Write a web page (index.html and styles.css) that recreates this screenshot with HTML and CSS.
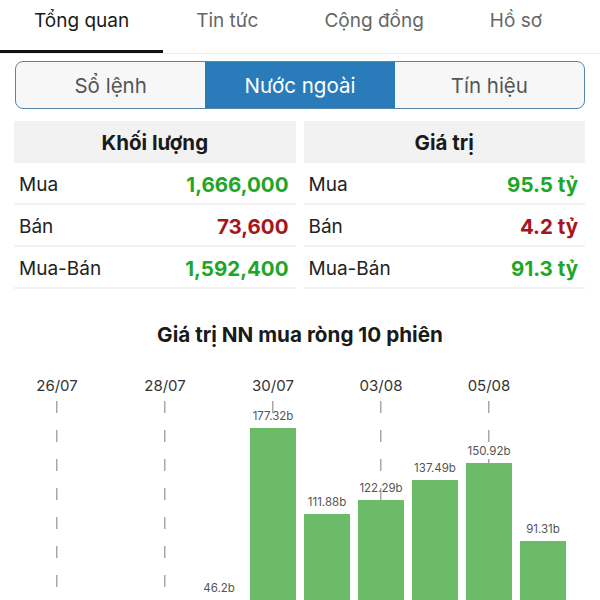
FILE: index.html
```html
<!DOCTYPE html>
<html lang="vi">
<head>
<meta charset="utf-8">
<title>Nước ngoài</title>
<link rel="stylesheet" href="styles.css">
</head>
<body>
<nav class="tabs">
  <div class="tab active">Tổng quan</div>
  <div class="tab">Tin tức</div>
  <div class="tab">Cộng đồng</div>
  <div class="tab">Hồ sơ</div>
</nav>

<div class="segment">
  <div class="seg">Sổ lệnh</div>
  <div class="seg on">Nước ngoài</div>
  <div class="seg">Tín hiệu</div>
</div>

<div class="tables">
  <div class="table">
    <div class="thead">Khối lượng</div>
    <div class="row"><span class="lbl">Mua</span><span class="val up">1,666,000</span></div>
    <div class="row"><span class="lbl">Bán</span><span class="val down">73,600</span></div>
    <div class="row"><span class="lbl">Mua-Bán</span><span class="val up">1,592,400</span></div>
  </div>
  <div class="table">
    <div class="thead">Giá trị</div>
    <div class="row"><span class="lbl">Mua</span><span class="val up">95.5 tỷ</span></div>
    <div class="row"><span class="lbl">Bán</span><span class="val down">4.2 tỷ</span></div>
    <div class="row"><span class="lbl">Mua-Bán</span><span class="val up">91.3 tỷ</span></div>
  </div>
</div>

<h2 class="chart-title">Giá trị NN mua ròng 10 phiên</h2>

<div class="chart">
  <div class="col"><div class="date">26/07</div><div class="plot dashed"></div></div>
  <div class="col"><div class="date"></div><div class="plot"></div></div>
  <div class="col"><div class="date">28/07</div><div class="plot dashed"></div></div>
  <div class="col"><div class="date"></div><div class="plot"><span class="vl">46.2b</span><div class="bar" style="height:61px"></div></div></div>
  <div class="col"><div class="date">30/07</div><div class="plot dashed"><span class="vl">177.32b</span><div class="bar" style="height:233px"></div></div></div>
  <div class="col"><div class="date"></div><div class="plot"><span class="vl">111.88b</span><div class="bar" style="height:147px"></div></div></div>
  <div class="col"><div class="date">03/08</div><div class="plot dashed"><span class="vl">122.29b</span><div class="bar" style="height:161px"></div></div></div>
  <div class="col"><div class="date"></div><div class="plot"><span class="vl">137.49b</span><div class="bar" style="height:181px"></div></div></div>
  <div class="col"><div class="date">05/08</div><div class="plot dashed"><span class="vl">150.92b</span><div class="bar" style="height:198px"></div></div></div>
  <div class="col"><div class="date"></div><div class="plot"><span class="vl">91.31b</span><div class="bar" style="height:120px"></div></div></div>
</div>
</body>
</html>
```

FILE: styles.css
```css
* { box-sizing: border-box; }
html, body { margin: 0; padding: 0; background: #fff; }
body {
  font-family: Inter, "Noto Sans", "DejaVu Sans", sans-serif;
  color: #222;
  overflow: hidden;
}

.tabs {
  display: flex;
  height: 54px;
  border-bottom: 1px solid #ededed;
}
.tab {
  padding: 9px 33px 0;
  font-size: 19px;
  line-height: 24px;
  color: #666;
  height: 53px;
}
.tab.active {
  color: #1a1a1a;
  border-bottom: 3px solid #111;
  padding-left: 34px;
  padding-right: 34px;
}

.segment {
  display: flex;
  margin: 7px 15px 0;
  height: 48px;
  border: 1.5px solid #5585ab;
  border-radius: 8px;
  overflow: hidden;
  background: #f7f7f8;
}
.seg {
  flex: 1;
  display: flex;
  align-items: center;
  justify-content: center;
  font-size: 20.5px;
  color: #555;
}
.seg.on {
  background: #2a7bb9;
  color: #fff;
}

.tables {
  display: grid;
  grid-template-columns: 1fr 1fr;
  column-gap: 8px;
  margin: 12px 15px 0 14px;
}
.thead {
  height: 42px;
  background: #f2f2f2;
  display: flex;
  align-items: center;
  justify-content: center;
  font-size: 20.5px;
  font-weight: 700;
  color: #1a1a1a;
}
.row {
  display: flex;
  justify-content: space-between;
  align-items: center;
  height: 42px;
  padding: 2px 7px 0 5px;
  border-bottom: 2px solid #f2f2f2;
  font-size: 19px;
}
.lbl { color: #222; }
.val { font-weight: 700; font-size: 20.5px; }
.up { color: #1ea629; }
.down { color: #a6141c; }

.chart-title {
  margin: 34px 0 0;
  text-align: center;
  font-size: 20.7px;
  line-height: 24px;
  font-weight: 700;
  color: #1a1a1a;
}

.chart {
  display: flex;
  margin: 30px 30px 0;
  height: 284px;
}
.col {
  width: 54px;
  display: flex;
  flex-direction: column;
  align-items: center;
}
.date {
  height: 18px;
  line-height: 18px;
  font-size: 15px;
  color: #333;
  margin-bottom: 6px;
}
.plot {
  flex: 1;
  width: 100%;
  display: flex;
  flex-direction: column;
  justify-content: flex-end;
  align-items: center;
}
.plot.dashed {
  background-image: repeating-linear-gradient(to bottom, #a8a8a8 0 12px, transparent 12px 29px);
  background-size: 1.5px 100%;
  background-repeat: no-repeat;
  background-position: center top;
}
.vl {
  font-size: 11.5px;
  line-height: 14px;
  color: #555;
  margin-bottom: 5px;
}
.bar {
  width: 46px;
  background: #6bbb69;
}
```
